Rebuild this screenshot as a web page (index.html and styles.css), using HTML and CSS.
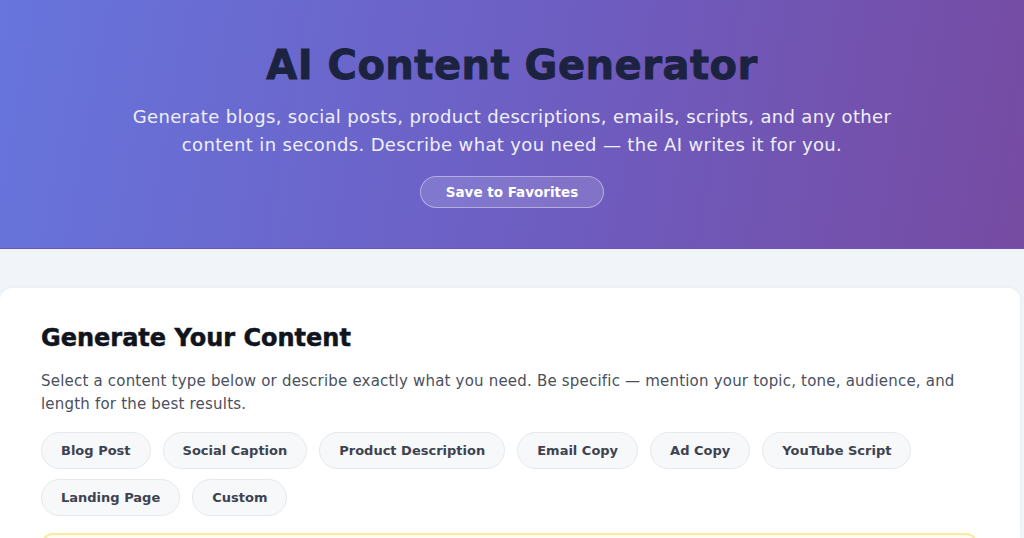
FILE: index.html
```html
<!DOCTYPE html>
<html lang="en">
<head>
<meta charset="utf-8">
<title>AI Content Generator</title>
<link rel="stylesheet" href="styles.css">
</head>
<body>
<header class="hero">
  <h1 class="hero-title">AI Content Generator</h1>
  <p class="hero-sub">Generate blogs, social posts, product descriptions, emails, scripts, and any other content in seconds. Describe what you need — the AI writes it for you.</p>
  <button class="fav-btn">Save to Favorites</button>
</header>
<div class="band"></div>
<main class="card">
  <h2 class="card-title">Generate Your Content</h2>
  <p class="card-desc">Select a content type below or describe exactly what you need. Be specific — mention your topic, tone, audience, and length for the best results.</p>
  <div class="chips">
    <button class="chip">Blog Post</button>
    <button class="chip">Social Caption</button>
    <button class="chip">Product Description</button>
    <button class="chip">Email Copy</button>
    <button class="chip">Ad Copy</button>
    <button class="chip">YouTube Script</button>
    <button class="chip">Landing Page</button>
    <button class="chip">Custom</button>
  </div>
  <div class="tip-box"></div>
</main>
</body>
</html>
```
FILE: styles.css
```css
* { box-sizing: border-box; }
html, body { margin: 0; padding: 0; }
body {
  font-family: "DejaVu Sans", Verdana, sans-serif;
  background: #f1f4f9;
  overflow: hidden;
  height: 538px;
}
.hero {
  height: 249px;
  background: linear-gradient(100deg, #6775dc 0%, #6d5fc4 50%, #764ba2 100%);
  border-bottom: 1px solid #6a56b8;
  display: flex;
  flex-direction: column;
  align-items: center;
  padding-top: 41px;
}
.hero-title {
  margin: 0;
  font-size: 40px;
  font-weight: 700;
  color: #1b2340;
  line-height: 48px;
  letter-spacing: 0.5px;
  -webkit-text-stroke: 0.9px #1b2340;
}
.hero-sub {
  margin: 14px 0 0;
  width: 780px;
  text-align: center;
  color: #eef0fb;
  font-size: 18px;
  line-height: 28px;
  letter-spacing: 0.35px;
}
.fav-btn {
  margin-top: 17px;
  height: 32px;
  padding: 0 25px;
  border-radius: 16px;
  border: 1px solid rgba(255,255,255,0.4);
  background: rgba(255,255,255,0.14);
  color: #ffffff;
  font-family: "DejaVu Sans", Verdana, sans-serif;
  font-weight: 700;
  font-size: 13.5px;
}
.band { height: 39px; }
.card {
  margin-right: 4px;
  background: #ffffff;
  border-radius: 12px 12px 0 0;
  box-shadow: 0 -1px 4px rgba(0,0,0,0.04);
  padding: 34px 42px 0 41px;
  height: 250px;
}
.card-title {
  margin: 0;
  font-size: 24px;
  line-height: 32px;
  font-weight: 700;
  color: #10141e;
  -webkit-text-stroke: 0.5px #10141e;
}
.card-desc {
  margin: 16px 0 0;
  font-size: 15px;
  line-height: 23px;
  letter-spacing: 0.2px;
  color: #4a5060;
}
.chips {
  margin-top: 16px;
  display: flex;
  flex-wrap: wrap;
  gap: 10px 12px;
}
.chip {
  height: 37px;
  padding: 0 19px;
  border-radius: 19px;
  border: 1px solid #e6e8ec;
  background: #f7f8fa;
  color: #3d4350;
  font-family: "DejaVu Sans", Verdana, sans-serif;
  font-size: 13px;
  font-weight: 700;
}
.tip-box {
  margin-top: 17px;
  height: 60px;
  border: 2px solid #fbe9a0;
  border-radius: 12px;
  background: #fffdf3;
}
```
